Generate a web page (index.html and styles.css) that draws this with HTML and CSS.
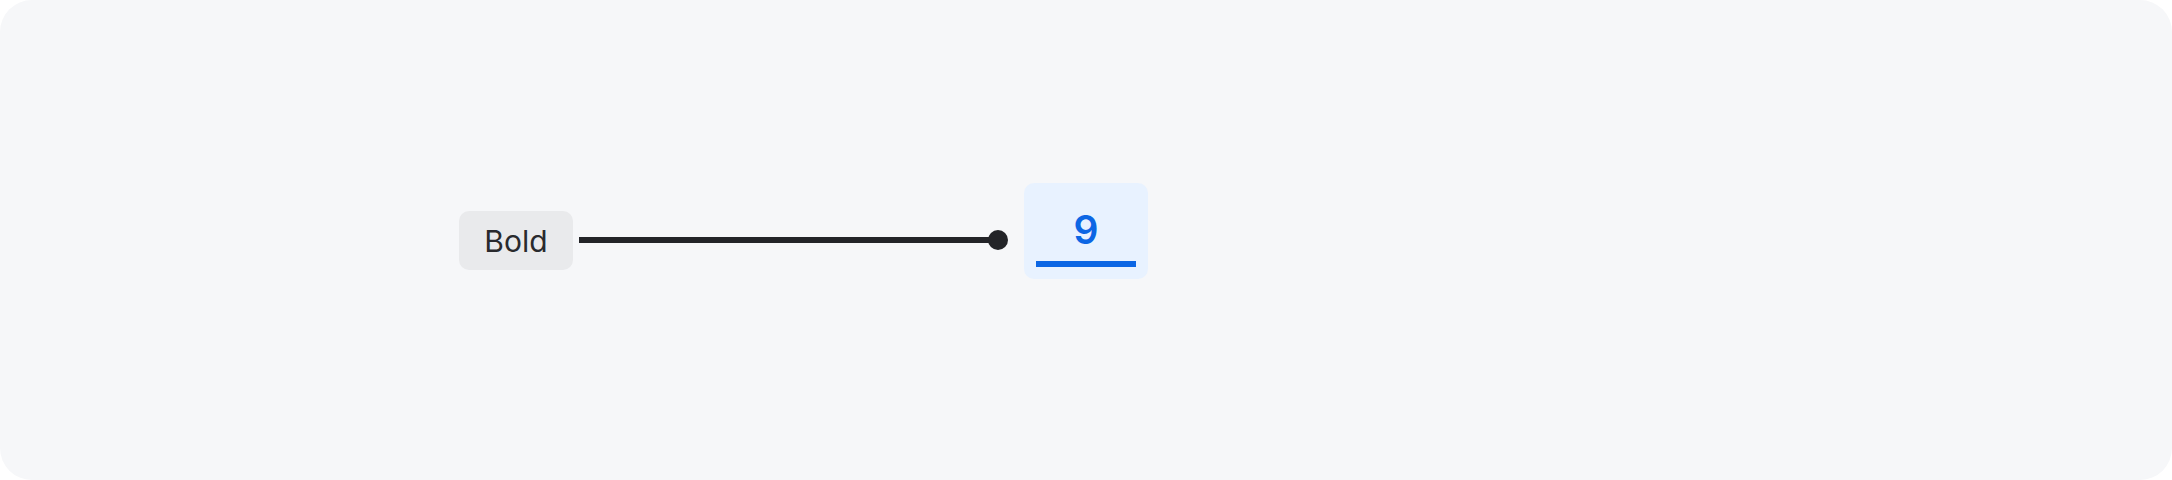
FILE: index.html
```html
<!DOCTYPE html>
<html lang="en">
<head>
    <meta charset="utf-8" />
    <meta name="viewport" content="width=device-width, initial-scale=1" />
    <title>Heading level</title>
    <link rel="stylesheet" href="styles.css">
</head>
<body>
    <div class="canvas">
        <div class="link-row">
            <span class="chip">Bold</span>
            <span class="connector">
                <span class="connector-line"></span>
                <span class="connector-dot"></span>
            </span>
            <div class="value-box">
                <span class="value">9</span>
                <span class="value-bar"></span>
            </div>
        </div>
    </div>
</body>
</html>
```

FILE: styles.css
```css
* {
    margin: 0;
    padding: 0;
    box-sizing: border-box;
}

body {
    font-family: Inter, 'Noto Sans', sans-serif;
    background: #ffffff;
    width: 2172px;
    height: 480px;
    overflow: hidden;
}

.canvas {
    width: 2172px;
    height: 480px;
    background: #f6f7f9;
    border-radius: 32px;
    display: flex;
    align-items: center;
    padding-left: 459px;
}

.link-row {
    display: flex;
    align-items: center;
}

.chip {
    width: 114px;
    height: 59px;
    display: flex;
    align-items: center;
    justify-content: center;
    background: #e9eaec;
    border-radius: 10px;
    color: #292a2e;
    font-size: 30px;
    line-height: 1;
    padding-top: 2px;
}

.connector {
    display: flex;
    align-items: center;
    margin-left: 6px;
}

.connector-line {
    width: 413px;
    height: 6px;
    background: #232428;
}

.connector-dot {
    width: 20px;
    height: 20px;
    border-radius: 50%;
    background: #232428;
    margin-left: -4px;
}

.value-box {
    width: 124px;
    height: 96px;
    margin-left: 16px;
    margin-bottom: 18px;
    background: #e8f2ff;
    border-radius: 10px;
    display: flex;
    flex-direction: column;
    align-items: center;
    padding-top: 27px;
}

.value {
    font-size: 39px;
    font-weight: 600;
    line-height: 1;
    color: #0c66e4;
}

.value-bar {
    width: 100px;
    height: 6px;
    background: #0c66e4;
    margin-top: 12px;
}
```
